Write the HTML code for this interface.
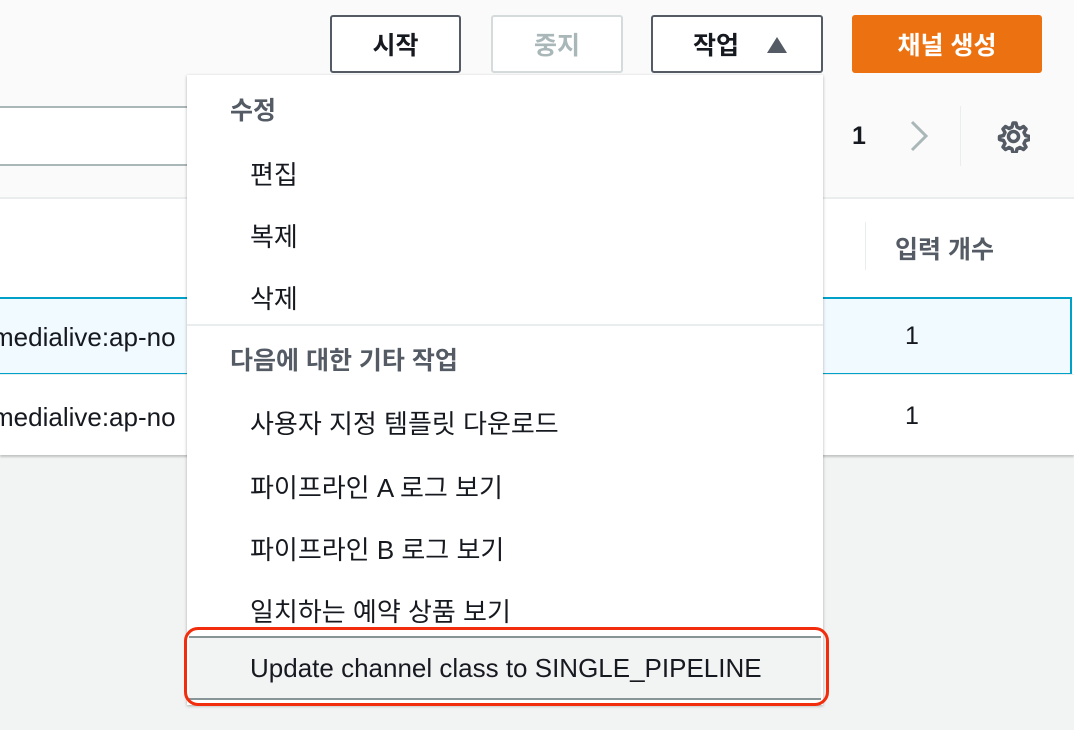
<!DOCTYPE html>
<html><head><meta charset="utf-8"><style>
*{margin:0;padding:0;box-sizing:border-box}
body{width:1074px;height:730px;overflow:hidden;background:#f2f3f3;font-family:"Liberation Sans","Noto Sans CJK KR",sans-serif;position:relative;color:#16191f}
.abs{position:absolute}
.btn{position:absolute;top:15px;height:58px;border:2px solid #545b64;border-radius:3px;background:#fff;font-size:25px;font-weight:bold;display:flex;align-items:center;justify-content:center;color:#16191f}
.item{position:absolute;left:250px;font-size:26px;color:#16191f;white-space:nowrap}
.hdr{position:absolute;left:230px;font-size:25px;font-weight:bold;color:#545b64}
</style></head><body>
<div class="abs" style="left:0;top:0;width:1074px;height:197px;background:#fafafa"></div>
<div class="btn" style="left:330px;width:131px">시작</div>
<div class="btn" style="left:491px;width:132px;border-color:#d5dbdb;color:#aab7b8">중지</div>
<div class="btn" style="left:651px;width:172px;justify-content:flex-start;padding-left:40px">작업<span style="position:absolute;left:114px;top:20px;width:0;height:0;border-left:10px solid transparent;border-right:10px solid transparent;border-bottom:16px solid #545b64"></span></div>
<div class="btn" style="left:852px;width:190px;background:#ec7211;border-color:#ec7211;color:#fff">채널 생성</div>
<div class="abs" style="left:-5px;top:106px;width:200px;height:60px;background:#fff;border:2px solid #aab7b8;border-radius:3px"></div>
<div class="abs" style="left:852px;top:122px;font-size:25px;font-weight:bold">1</div>
<svg class="abs" style="left:908px;top:120px" width="22" height="32"><path d="M4 2 L18 16 L4 30" fill="none" stroke="#aab7b8" stroke-width="3"/></svg>
<div class="abs" style="left:960px;top:106px;width:1px;height:60px;background:#eaeded"></div>
<svg class="abs" style="left:996px;top:119px" width="34" height="34" viewBox="0 0 34 34"><path d="M17 4 l3 0 1 4 3 1.5 3.5-2 2.5 2.5-2 3.5 1.5 3 4 1 0 3-4 1-1.5 3 2 3.5-2.5 2.5-3.5-2-3 1.5-1 4-3 0-1-4-3-1.5-3.5 2-2.5-2.5 2-3.5-1.5-3-4-1 0-3 4-1 1.5-3-2-3.5 2.5-2.5 3.5 2 3-1.5 1-4z" fill="none" stroke="#545b64" stroke-width="3.5" stroke-linejoin="round"/><circle cx="17.5" cy="17.5" r="5" fill="none" stroke="#545b64" stroke-width="3.5"/></svg>
<div class="abs" style="left:0;top:197px;width:1074px;height:258px;background:#fff;border-top:2px solid #eaeded;box-shadow:0 2px 2px rgba(0,0,0,.2)"></div>
<div class="abs" style="left:865px;top:222px;width:1px;height:48px;background:#eaeded"></div>
<div class="abs" style="left:895px;top:230px;font-size:25px;font-weight:bold;color:#545b64">입력 개수</div>
<div class="abs" style="left:-2px;top:297px;width:1074px;height:78px;background:#f1faff;border:2px solid #00a1c9"></div>
<div class="abs" style="left:0;top:374px;width:1074px;height:1px;background:#eaeded"></div>
<div class="abs" style="left:-8px;top:322px;font-size:26px">medialive:ap-no</div>
<div class="abs" style="left:-8px;top:402px;font-size:26px">medialive:ap-no</div>
<div class="abs" style="left:905px;top:322px;font-size:25px">1</div>
<div class="abs" style="left:905px;top:402px;font-size:25px">1</div>
<div class="abs" style="left:187px;top:75px;width:636px;height:630px;background:#fff;box-shadow:0 1px 3px rgba(0,0,0,.3)"></div>
<div class="hdr" style="top:91px">수정</div>
<div class="item" style="top:155px">편집</div>
<div class="item" style="top:217px">복제</div>
<div class="item" style="top:279px">삭제</div>
<div class="abs" style="left:187px;top:324px;width:636px;height:2px;background:#eaeded"></div>
<div class="hdr" style="top:341px">다음에 대한 기타 작업</div>
<div class="item" style="top:404px">사용자 지정 템플릿 다운로드</div>
<div class="item" style="top:468px">파이프라인 A 로그 보기</div>
<div class="item" style="top:530px">파이프라인 B 로그 보기</div>
<div class="item" style="top:592px">일치하는 예약 상품 보기</div>
<div class="abs" style="left:189px;top:636px;width:632px;height:64px;background:#f2f3f3;border-top:2px solid #879596;border-bottom:2px solid #879596"></div>
<div class="item" style="top:653px">Update channel class to SINGLE_PIPELINE</div>
<div class="abs" style="left:184px;top:627px;width:645px;height:79px;border:3px solid #f22d0d;border-radius:14px"></div>
</body></html>
